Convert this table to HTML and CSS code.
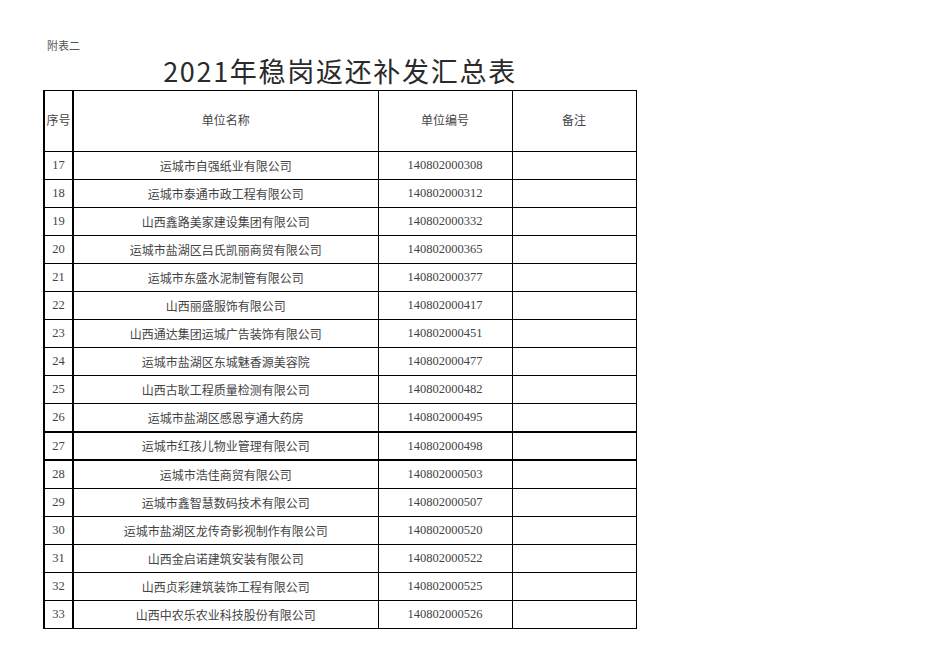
FILE: index.html
```html
<!DOCTYPE html>
<html lang="zh">
<head>
<meta charset="utf-8">
<link rel="stylesheet" href="styles.css">
</head>
<body>
<div class="page">
  <div class="note">附表二</div>
  <h1 class="title">2021年稳岗返还补发汇总表</h1>
  <table class="sheet">
    <colgroup>
      <col class="c-no"><col class="c-name"><col class="c-code"><col class="c-memo">
    </colgroup>
    <thead>
      <tr class="head"><th>序号</th><th>单位名称</th><th>单位编号</th><th>备注</th></tr>
    </thead>
    <tbody>
      <tr><td class="num">17</td><td>运城市自强纸业有限公司</td><td class="num">140802000308</td><td></td></tr>
      <tr><td class="num">18</td><td>运城市泰通市政工程有限公司</td><td class="num">140802000312</td><td></td></tr>
      <tr><td class="num">19</td><td>山西鑫路美家建设集团有限公司</td><td class="num">140802000332</td><td></td></tr>
      <tr><td class="num">20</td><td>运城市盐湖区吕氏凯丽商贸有限公司</td><td class="num">140802000365</td><td></td></tr>
      <tr><td class="num">21</td><td>运城市东盛水泥制管有限公司</td><td class="num">140802000377</td><td></td></tr>
      <tr><td class="num">22</td><td>山西丽盛服饰有限公司</td><td class="num">140802000417</td><td></td></tr>
      <tr><td class="num">23</td><td>山西通达集团运城广告装饰有限公司</td><td class="num">140802000451</td><td></td></tr>
      <tr><td class="num">24</td><td>运城市盐湖区东城魅香源美容院</td><td class="num">140802000477</td><td></td></tr>
      <tr><td class="num">25</td><td>山西古耿工程质量检测有限公司</td><td class="num">140802000482</td><td></td></tr>
      <tr><td class="num">26</td><td>运城市盐湖区感恩亨通大药房</td><td class="num">140802000495</td><td></td></tr>
      <tr class="bold"><td class="num">27</td><td>运城市红孩儿物业管理有限公司</td><td class="num">140802000498</td><td></td></tr>
      <tr><td class="num">28</td><td>运城市浩佳商贸有限公司</td><td class="num">140802000503</td><td></td></tr>
      <tr><td class="num">29</td><td>运城市鑫智慧数码技术有限公司</td><td class="num">140802000507</td><td></td></tr>
      <tr><td class="num">30</td><td>运城市盐湖区龙传奇影视制作有限公司</td><td class="num">140802000520</td><td></td></tr>
      <tr><td class="num">31</td><td>山西金启诺建筑安装有限公司</td><td class="num">140802000522</td><td></td></tr>
      <tr><td class="num">32</td><td>山西贞彩建筑装饰工程有限公司</td><td class="num">140802000525</td><td></td></tr>
      <tr><td class="num">33</td><td>山西中农乐农业科技股份有限公司</td><td class="num">140802000526</td><td></td></tr>
    </tbody>
  </table>
</div>
</body>
</html>
```

FILE: styles.css
```css
html, body {
  margin: 0;
  padding: 0;
  background: #ffffff;
}
.page {
  padding: 38px 0 0 43px;
  width: 593px;
  font-family: "Liberation Serif", "Noto Sans CJK SC", serif;
  color: #2a2a2a;
}
.note {
  font-family: "Noto Sans CJK SC", sans-serif;
  font-size: 11px;
  line-height: 14px;
  height: 14px;
  padding-left: 4px;
  color: #555;
}
.title {
  margin: 0;
  height: 38px;
  font-family: "Noto Sans CJK SC", "Noto Sans", sans-serif;
  font-weight: 400;
  font-size: 27px;
  line-height: 38px;
  letter-spacing: 1.7px;
  text-align: center;
  color: #2a2a2a;
  padding-left: 1px;
}
.sheet {
  border-collapse: collapse;
  table-layout: fixed;
  width: 592px;
  font-size: 12px;
}
.c-no { width: 29px; }
.c-name { width: 305px; }
.c-code { width: 134px; }
.c-memo { width: 124px; }
.sheet th, .sheet td {
  border: 1px solid #000;
  padding: 0;
  text-align: center;
  vertical-align: middle;
  white-space: nowrap;
  overflow: hidden;
}
.sheet th {
  font-weight: 400;
  font-family: "Noto Sans CJK SC", sans-serif;
  height: 57px;
  padding-bottom: 3px;
  color: #444;
}
.sheet td {
  height: 27px;
  font-family: "Liberation Serif", "Noto Sans CJK SC", serif;
  color: #444;
}
.sheet td.num {
  font-size: 12.5px;
}
.sheet th:first-child, .sheet td:first-child {
  border-left: 2px solid #000;
  border-right: 2px solid #000;
}
.sheet tr.bold td {
  height: 26px;
  border-top: 2px solid #000;
  border-bottom: 2px solid #000;
}
```
